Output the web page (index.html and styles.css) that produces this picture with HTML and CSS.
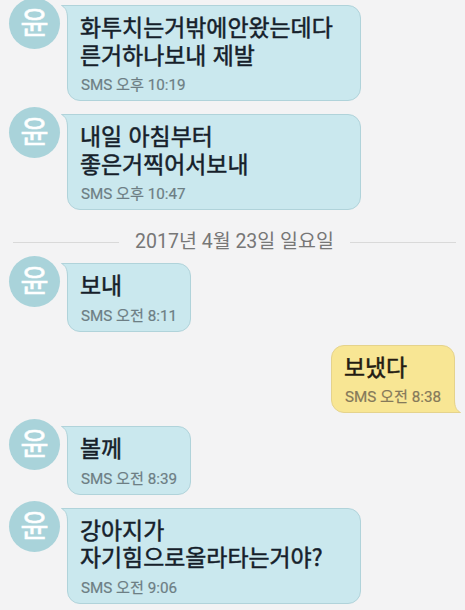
FILE: index.html
```
<!DOCTYPE html>
<html lang="ko">
<head>
  <meta charset="UTF-8" />
  <meta name="viewport" content="width=device-width, initial-scale=1.0"/>
  <title>Messages</title>
  <link rel="stylesheet" href="styles.css">
</head>
<body>

<div class="thread">
  <div class="row">
    <div class="avatar">윤</div>
    <div class="bubble wide">
      <svg class="tail" viewBox="0 0 9 14"><path class="fill" d="M9 .5H.5C4 2.5 6.5 5 6.5 13H9Z"/><path class="edge" d="M9 .5H.5C4 2.5 6.5 5 6.5 14"/></svg>
      <p class="text">화투치는거밖에안왔는데다<br>른거하나보내 제발</p>
      <p class="meta">SMS 오후 10:19</p>
    </div>
  </div>

  <div class="row">
    <div class="avatar">윤</div>
    <div class="bubble wide">
      <svg class="tail" viewBox="0 0 9 14"><path class="fill" d="M9 .5H.5C4 2.5 6.5 5 6.5 13H9Z"/><path class="edge" d="M9 .5H.5C4 2.5 6.5 5 6.5 14"/></svg>
      <p class="text">내일 아침부터<br>좋은거찍어서보내</p>
      <p class="meta">SMS 오후 10:47</p>
    </div>
  </div>

  <div class="date"><span>2017년 4월 23일 일요일</span></div>

  <div class="row">
    <div class="avatar">윤</div>
    <div class="bubble">
      <svg class="tail" viewBox="0 0 9 14"><path class="fill" d="M9 .5H.5C4 2.5 6.5 5 6.5 13H9Z"/><path class="edge" d="M9 .5H.5C4 2.5 6.5 5 6.5 14"/></svg>
      <p class="text">보내</p>
      <p class="meta">SMS 오전 8:11</p>
    </div>
  </div>

  <!-- sent message -->
  <div class="row sent">
    <div class="bubble">
      <svg class="tail" viewBox="0 0 9 14"><path class="fill" d="M0 13.5H8.5C5 11.5 2.5 9 2.5 1H0Z"/><path class="edge" d="M0 13.5H8.5C5 11.5 2.5 9 2.5 0"/></svg>
      <p class="text">보냈다</p>
      <p class="meta">SMS 오전 8:38</p>
    </div>
  </div>

  <div class="row">
    <div class="avatar">윤</div>
    <div class="bubble">
      <svg class="tail" viewBox="0 0 9 14"><path class="fill" d="M9 .5H.5C4 2.5 6.5 5 6.5 13H9Z"/><path class="edge" d="M9 .5H.5C4 2.5 6.5 5 6.5 14"/></svg>
      <p class="text">볼께</p>
      <p class="meta">SMS 오전 8:39</p>
    </div>
  </div>

  <div class="row">
    <div class="avatar">윤</div>
    <div class="bubble wide">
      <svg class="tail" viewBox="0 0 9 14"><path class="fill" d="M9 .5H.5C4 2.5 6.5 5 6.5 13H9Z"/><path class="edge" d="M9 .5H.5C4 2.5 6.5 5 6.5 14"/></svg>
      <p class="text">강아지가<br>자기힘으로올라타는거야?</p>
      <p class="meta">SMS 오전 9:06</p>
    </div>
  </div>
</div>

</body>
</html>
```
FILE: styles.css
```
* { margin: 0; padding: 0; box-sizing: border-box; }

html, body {
  height: 100%;
  overflow: hidden;
  background: #f3f3f4;
  font-family: Roboto, "Noto Sans CJK KR", sans-serif;
}

.thread {
  display: flex;
  flex-direction: column;
  gap: 13px;
  padding: 5px 9px 0;
}

.row {
  display: flex;
  align-items: flex-start;
  gap: 7px;
}

.avatar {
  width: 51px;
  height: 51px;
  margin-top: -7px;
  margin-bottom: -7px;
  border-radius: 50%;
  background: #a9d3da;
  color: #fff;
  font-size: 31px;
  line-height: 52px;
  text-align: center;
  -webkit-text-stroke: 0.5px #fff;
}

.bubble {
  --bg: #cae8ee;
  --line: #b0d3da;
  position: relative;
  width: 124px;
  height: 68.5px;
  padding: 7px 0 0 12px;
  background: var(--bg);
  border: 1px solid var(--line);
  border-radius: 0 13px 13px 13px;
  white-space: nowrap;
}

.bubble.wide {
  width: 294px;
  height: 96px;
}

.text {
  font-family: "Noto Sans CJK KR", sans-serif;
  font-size: 22.9px;
  line-height: 27.5px;
  color: #15202a;
  -webkit-text-stroke: 0.5px currentColor;
}

.meta {
  margin-top: 7px;
  padding-left: 1px;
  font-size: 15.2px;
  line-height: 20px;
  color: #6d7e84;
  -webkit-text-stroke: 0.2px currentColor;
}

.tail {
  position: absolute;
  top: -1px;
  left: -7px;
  width: 9px;
  height: 14px;
}

.tail .fill { fill: var(--bg); }
.tail .edge { fill: none; stroke: var(--line); }

.sent { justify-content: flex-end; }

.sent .bubble {
  --bg: #f8e694;
  --line: #e5d38c;
  margin-right: 1px;
  border-radius: 13px 13px 0 13px;
}

.sent .text { color: #241b12; }
.sent .meta { color: #85795a; }

.sent .tail {
  top: auto;
  bottom: -1px;
  left: auto;
  right: -7px;
}

.date {
  display: flex;
  align-items: center;
  gap: 16px;
  height: 27px;
  margin: 6px 0 -6px;
  padding: 0 0 0 4px;
  color: #777;
  font-size: 19.5px;
  line-height: 25px;
  white-space: nowrap;
}

.date span { margin-top: -3px; }

.date::before, .date::after {
  content: "";
  flex: 1;
  height: 1px;
  background: #d9d9d9;
}
```
